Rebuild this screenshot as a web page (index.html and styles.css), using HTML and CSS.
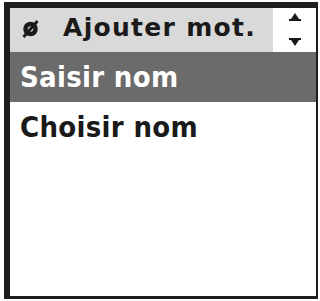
FILE: index.html
```
<!DOCTYPE html>
<html>
<head>
<meta charset="utf-8">
<link rel="stylesheet" href="styles.css">
</head>
<body>
<div class="frame">
  <div class="header">
    <div class="title">
      <svg class="icon" width="17" height="18" viewBox="0 0 17 18">
        <circle cx="8.5" cy="9" r="5" fill="none" stroke="#1a1a1a" stroke-width="4.5"/>
        <path d="M1.5 17 L15.5 1" stroke="#1a1a1a" stroke-width="3"/>
      </svg>
      <span class="label">Ajouter mot.</span>
    </div>
    <div class="scroll">
      <svg width="12" height="34" viewBox="0 0 12 34">
        <path d="M6 0 L10 6 L2 6 Z" fill="#1a1a1a"/>
        <rect x="0" y="6" width="12" height="2" fill="#1a1a1a"/>
        <rect x="0" y="25" width="12" height="2" fill="#1a1a1a"/>
        <path d="M2 27 L10 27 L6 33 Z" fill="#1a1a1a"/>
      </svg>
    </div>
  </div>
  <div class="item selected">Saisir nom</div>
  <div class="item">Choisir nom</div>
</div>
</body>
</html>
```
FILE: styles.css
```
html, body {
  margin: 0;
  padding: 0;
  background: #ffffff;
}
.frame {
  margin: 2px 0 0 4px;
  width: 306px;
  height: 288px;
  border-style: solid;
  border-color: #1e1e1e;
  border-width: 6px 2px 3px 6px;
  font-family: "DejaVu Sans Condensed", "DejaVu Sans", sans-serif;
  font-weight: bold;
  color: #1a1a1a;
  display: flex;
  flex-direction: column;
}
.header {
  height: 44px;
  display: flex;
  background: #d9d9d9;
}
.title {
  flex: 1;
  display: flex;
  align-items: center;
  padding-left: 12px;
  padding-bottom: 6px;
  box-sizing: border-box;
  font-family: "DejaVu Sans", sans-serif;
  font-size: 25px;
  letter-spacing: 1.3px;
}
.icon {
  margin-top: 4px;
  margin-right: 24px;
  flex: none;
}
.scroll {
  width: 43px;
  background: #ffffff;
  display: flex;
  justify-content: center;
  padding-top: 5px;
  box-sizing: border-box;
}
.item {
  height: 50px;
  display: flex;
  align-items: center;
  padding-left: 10px;
  font-size: 29px;
  letter-spacing: 0.3px;
}
.selected {
  background: #6b6b6b;
  color: #ffffff;
}
```
